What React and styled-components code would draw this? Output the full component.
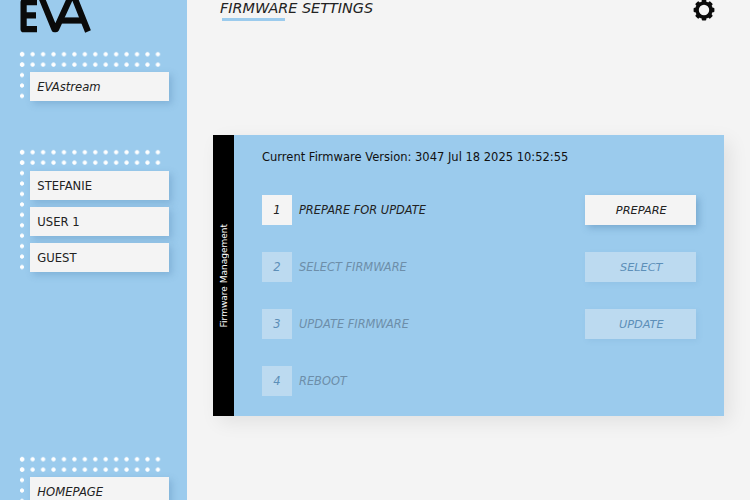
import React from 'react';
import styled, { createGlobalStyle } from 'styled-components';

const Global = createGlobalStyle`
  html, body { margin: 0; padding: 0; height: 100%; overflow: hidden; }
  body { font-family: "DejaVu Sans", Verdana, sans-serif; background: #f4f4f4; }
`;
const Page = styled.div`
  display: flex; width: 750px; height: 500px; overflow: hidden; background: #f4f4f4;
`;
const Sidebar = styled.aside`
  flex: 0 0 187px; height: 500px; background: #9bcbed; overflow: hidden;
  display: flex; flex-direction: column; padding-left: 17px; box-sizing: border-box;
`;
const Logo = styled.svg`
  display: block; flex: none; margin: 0 0 16px 3px; width: 74px; height: 32.5px;
`;
const Group = styled.div`
  flex: none; width: 146.2px; box-sizing: border-box; margin-top: ${p => p.$top}px;
  padding: 23.5px 0 0 13.3px; display: flex; flex-direction: column; gap: 7px;
  background-image: radial-gradient(circle at center, #fff 1.7px, transparent 2.5px);
  background-size: 10.44px 10.44px;
  background-repeat: repeat-y;
  position: relative;
  &::before {
    content: ""; position: absolute; left: 0; top: 0; right: 0; height: 20.9px;
    background-image: radial-gradient(circle at center, #fff 1.7px, transparent 2.5px);
    background-size: 10.44px 10.44px;
  }
`;
const NavButton = styled.div`
  flex: none; position: relative; width: 139px; height: 29px; box-sizing: border-box;
  display: flex; align-items: center; padding: 1px 0 0 7px;
  background: #f4f4f4; color: #222; font-size: 11.6px;
  font-style: ${p => (p.$italic ? 'italic' : 'normal')};
  box-shadow: 3px 3px 7px rgba(70, 120, 165, .3);
`;
const Main = styled.main`
  flex: 1; min-width: 0; display: flex; flex-direction: column; padding-left: 26px;
`;
const Header = styled.header`
  display: flex; justify-content: space-between; align-items: flex-start;
  height: 135px; padding-right: 34px; box-sizing: border-box;
`;
const TitleWrap = styled.div`
  margin-left: 7px; display: flex; flex-direction: column; align-items: flex-start;
`;
const Title = styled.h1`
  margin: 0; font-size: 14.4px; font-weight: 400; font-style: italic; color: #222;
  line-height: 17px; white-space: nowrap;
`;
const Underline = styled.div`
  width: 63px; height: 3px; margin: 1px 0 0 2px; background: #9bcbed;
`;
const Gear = styled.svg`
  display: block; width: 24px; height: 24px; margin-top: -2px;
`;
const Panel = styled.section`
  display: flex; width: 511px; height: 281px;
  box-shadow: 6px 6px 18px rgba(0, 0, 0, .08);
`;
const Strip = styled.div`
  flex: 0 0 21px; background: #000; color: #fff; display: flex; align-items: center; justify-content: center;
`;
const StripText = styled.span`
  writing-mode: vertical-rl; transform: rotate(180deg); font-size: 9px; white-space: nowrap;
`;
const Body = styled.div`
  flex: 1; background: #9bcbed; padding: 14px 28px 0 28px; box-sizing: border-box;
  display: flex; flex-direction: column;
`;
const Version = styled.div`
  font-size: 11.5px; color: #111; line-height: 16px; height: 16px; margin-bottom: 30px; white-space: nowrap;
`;
const Steps = styled.div`
  display: flex; flex-direction: column; gap: 27.5px;
`;
const Step = styled.div`
  display: flex; align-items: center; height: 29.5px;
`;
const Num = styled.div`
  flex: 0 0 30px; height: 29.5px; display: flex; align-items: center; justify-content: center;
  font-size: 11.5px; font-style: italic;
  background: ${p => (p.$on ? '#f4f4f4' : '#bcdaf0')};
  color: ${p => (p.$on ? '#222' : '#5d8fb8')};
`;
const Label = styled.div`
  flex: 1; margin-left: 7px; font-size: 11.4px; font-style: italic; white-space: nowrap;
  color: ${p => (p.$on ? '#222' : '#6d8ea9')};
`;
const Action = styled.div`
  flex: 0 0 111.5px; height: 29.5px; display: flex; align-items: center; justify-content: center;
  font-size: 11.3px; font-style: italic; padding: 1px 0 0 2px; box-sizing: border-box;
  background: ${p => (p.$on ? '#f4f4f4' : '#bcdaf0')};
  color: ${p => (p.$on ? '#222' : '#5d8fb8')};
  box-shadow: ${p => (p.$on ? '3px 3px 7px rgba(60, 110, 155, .35)' : '2px 2px 5px rgba(80, 130, 175, .1)')};
`;

const teeth = Array.from({ length: 8 }, (_, i) => i * 45);
const steps = [
  ['1', 'PREPARE FOR UPDATE', 'PREPARE', true],
  ['2', 'SELECT FIRMWARE', 'SELECT', false],
  ['3', 'UPDATE FIRMWARE', 'UPDATE', false],
  ['4', 'REBOOT', null, false],
];

export default function App() {
  return (
    <Page>
      <Global />
      <Sidebar>
        <Logo viewBox="0 0 74 32.5" aria-label="EVA">
          <g fill="none" stroke="#0a0a0a" strokeWidth="6.2" strokeLinejoin="round">
            <path d="M17 2.2H3.6V29.2H17M3.6 15.4H16" />
            <path d="M20 -6L34.5 29.2H36L52 -6H53L68 31.5" />
            <path d="M42 20.5H62" />
          </g>
        </Logo>
        <Group $top={0}>
          <NavButton $italic>EVAstream</NavButton>
        </Group>
        <Group $top={46}>
          <NavButton>STEFANIE</NavButton>
          <NavButton>USER 1</NavButton>
          <NavButton>GUEST</NavButton>
        </Group>
        <Group $top={182}>
          <NavButton $italic>HOMEPAGE</NavButton>
        </Group>
      </Sidebar>
      <Main>
        <Header>
          <TitleWrap>
            <Title>FIRMWARE SETTINGS</Title>
            <Underline />
          </TitleWrap>
          <Gear viewBox="0 0 24 24" aria-label="Settings">
            <g fill="#0a0a0a">
              {teeth.map(a => (
                <rect key={a} x="9.7" y="1.6" width="4.6" height="4.4" rx="1" transform={`rotate(${a} 12 12)`} />
              ))}
            </g>
            <circle cx="12" cy="12" r="7" fill="none" stroke="#0a0a0a" strokeWidth="3.6" />
          </Gear>
        </Header>
        <Panel>
          <Strip><StripText>Firmware Management</StripText></Strip>
          <Body>
            <Version>Current Firmware Version: 3047 Jul 18 2025 10:52:55</Version>
            <Steps>
              {steps.map(([n, label, action, on]) => (
                <Step key={n}>
                  <Num $on={on}>{n}</Num>
                  <Label $on={on}>{label}</Label>
                  {action && <Action $on={on}>{action}</Action>}
                </Step>
              ))}
            </Steps>
          </Body>
        </Panel>
      </Main>
    </Page>
  );
}
